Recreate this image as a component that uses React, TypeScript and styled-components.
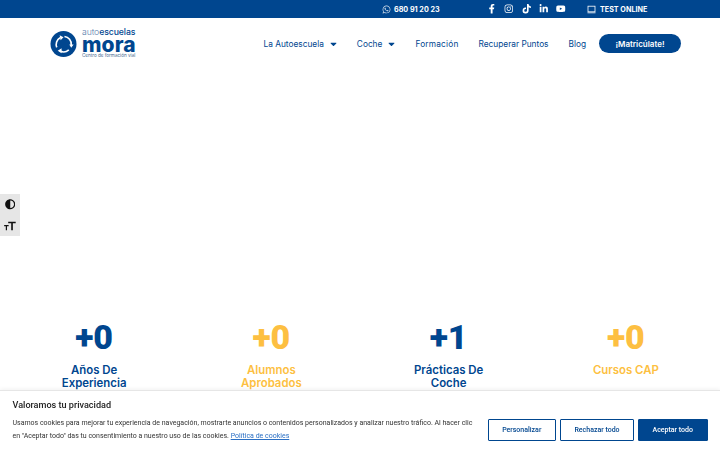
import React from 'react'
import styled, { createGlobalStyle } from 'styled-components'
import { FaWhatsapp, FaFacebookF, FaInstagram, FaTiktok, FaLinkedinIn, FaYoutube, FaCaretDown, FaAdjust } from 'react-icons/fa'

const BLUE = '#00468f'
const YELLOW = '#fdbf41'

const Global = createGlobalStyle`
  html, body { margin: 0; padding: 0; background: #fff; overflow: hidden; }
  body { font-family: Inter, "Open Sans", sans-serif; width: 720px; height: 450px; }
  * { box-sizing: border-box; }
`

const Page = styled.div`
  width: 720px;
  height: 450px;
  overflow: hidden;
`

const TopBar = styled.div`
  height: 18px;
  background: ${BLUE};
  color: #fff;
  display: flex;
  align-items: center;
  padding-left: 382px;
`
const Phone = styled.div`
  display: flex;
  align-items: center;
  gap: 3px;
  width: 105px;
  font-size: 7.2px;
  font-weight: 700;
  svg { width: 9px; height: 9px; opacity: .85; }
`
const Socials = styled.div`
  display: flex;
  align-items: center;
  gap: 7.8px;
  width: 100px;
  svg { display: block; width: 9.5px; height: 9.5px; }
`
const TestLink = styled.div`
  display: flex;
  align-items: center;
  gap: 4px;
  font-size: 7.2px;
  font-weight: 700;
`

const Header = styled.header`
  height: 52px;
  display: flex;
  align-items: center;
  justify-content: space-between;
  padding: 0 39px 1px 50px;
`
const Logo = styled.div`
  display: flex;
  align-items: center;
  gap: 5px;
  color: ${BLUE};
`
const LogoText = styled.div`
  display: flex;
  flex-direction: column;
`
const LogoTop = styled.span`
  font-size: 8.7px;
  line-height: 9px;
  font-weight: 300;
  color: #5b7fae;
  letter-spacing: -.1px;
  b { font-weight: 500; color: ${BLUE}; }
`
const LogoName = styled.span`
  font-size: 21px;
  line-height: 16px;
  font-weight: 800;
  letter-spacing: .1px;
`
const LogoSub = styled.span`
  font-size: 4.6px;
  line-height: 6px;
  color: #47698f;
`

const Nav = styled.nav`
  display: flex;
  align-items: center;
  gap: 20px;
`
const NavItem = styled.a`
  display: flex;
  align-items: center;
  gap: 6px;
  font-size: 8.3px;
  color: ${BLUE};
  letter-spacing: ${p => (p.$wide ? '.2px' : '0')};
  svg { width: 7px; height: 10px; }
`
const Enroll = styled.a`
  width: 82px;
  height: 19px;
  margin-left: -7px;
  border-radius: 10px;
  background: ${BLUE};
  color: #fff;
  font-size: 8px;
  font-weight: 600;
  display: flex;
  align-items: center;
  justify-content: center;
`

const Stats = styled.section`
  margin-top: 249px;
  padding: 0 5.5px;
  display: grid;
  grid-template-columns: repeat(4, 1fr);
`
const Stat = styled.div`
  text-align: center;
  color: ${p => (p.$accent ? YELLOW : BLUE)};
`
const Count = styled.div`
  font-family: Roboto, sans-serif;
  font-size: 34px;
  line-height: 37px;
  font-weight: 900;
`
const Label = styled.div`
  margin: 8px auto 0;
  width: 95px;
  font-size: 11.4px;
  line-height: 13px;
  font-weight: 600;
`

const A11y = styled.div`
  position: fixed;
  left: 0;
  top: 194px;
  width: 20px;
  background: #e6e6e6;
  color: #111;
  display: flex;
  flex-direction: column;
`
const A11yButton = styled.div`
  height: 21px;
  display: flex;
  align-items: center;
  justify-content: center;
`

const Cookie = styled.div`
  position: fixed;
  left: 0;
  right: 0;
  bottom: 0;
  height: 60px;
  background: #fff;
  border-top: 1px solid #e6e6e6;
  box-shadow: 0 -1px 4px rgba(0, 0, 0, .06);
  padding: 0 12.5px;
  display: flex;
  align-items: center;
  justify-content: space-between;
  font-family: Roboto, sans-serif;
`
const CookieText = styled.div`
  width: 462px;
`
const CookieTitle = styled.div`
  font-size: 9.1px;
  font-weight: 500;
  color: #212121;
  line-height: 12px;
  margin: 1px 0 6px;
`
const CookieBody = styled.div`
  font-size: 7px;
  line-height: 12.6px;
  color: #333;
  a { color: #2a6fc4; text-decoration: underline; }
`
const Actions = styled.div`
  display: flex;
  gap: 4px;
  margin-top: 18px;
`
const CookieButton = styled.button`
  height: 22px;
  width: ${p => p.$w}px;
  padding: 0;
  border: 1.2px solid ${BLUE};
  border-radius: 1px;
  background: ${p => (p.$solid ? BLUE : '#fff')};
  color: ${p => (p.$solid ? '#fff' : BLUE)};
  font: 500 7px Roboto, sans-serif;
`

const LogoMark = () => (
  <svg width="27" height="28" viewBox="0 0 28 28">
    <circle cx="14" cy="14" r="13.5" fill={BLUE} />
    <g fill="none" stroke="#fff" strokeWidth="1.7">
      <path d="M7 17.5 A8 8 0 0 1 10.5 7.5" />
      <path d="M15 6.2 A8 8 0 0 1 22 15" />
      <path d="M19.5 20 A8 8 0 0 1 10 21" />
    </g>
    <g fill="#fff">
      <path d="M10 5 L14 7 L11 10 Z" />
      <path d="M20 14.5 L24.5 14.5 L22 18 Z" />
      <path d="M12 18.5 L12 23.5 L8 21 Z" />
    </g>
  </svg>
)

const TabletIcon = () => (
  <svg width="9" height="9" viewBox="0 0 9 9" fill="none" stroke="#fff" strokeWidth=".8">
    <rect x="1" y="1.2" width="7" height="5.6" />
    <path d="M.5 7.8h8" />
  </svg>
)

const TextSizeIcon = () => (
  <svg width="12" height="12" viewBox="0 0 16 12" fill="#111">
    <path d="M5.6 0.4h10v2H11.8V11.8H9.6V2.4H5.6z" />
    <path d="M0.2 4.8h6v1.5H4V11.8H2.4V6.3H0.2z" />
  </svg>
)

const stats = [
  { count: '+0', label: 'Años De Experiencia' },
  { count: '+0', label: 'Alumnos Aprobados', accent: true },
  { count: '+1', label: 'Prácticas De Coche' },
  { count: '+0', label: 'Cursos CAP', accent: true },
]

export default function App() {
  return (
    <Page>
      <Global />
      <TopBar>
        <Phone><FaWhatsapp />680 91 20 23</Phone>
        <Socials>
          <FaFacebookF /><FaInstagram /><FaTiktok /><FaLinkedinIn /><FaYoutube />
        </Socials>
        <TestLink><TabletIcon />TEST ONLINE</TestLink>
      </TopBar>
      <Header>
        <Logo>
          <LogoMark />
          <LogoText>
            <LogoTop>auto<b>escuelas</b></LogoTop>
            <LogoName>mora</LogoName>
            <LogoSub>Centro de formación vial</LogoSub>
          </LogoText>
        </Logo>
        <Nav>
          <NavItem>La Autoescuela <FaCaretDown /></NavItem>
          <NavItem>Coche <FaCaretDown /></NavItem>
          <NavItem $wide>Formación</NavItem>
          <NavItem>Recuperar Puntos</NavItem>
          <NavItem>Blog</NavItem>
          <Enroll>¡Matricúlate!</Enroll>
        </Nav>
      </Header>
      <Stats>
        {stats.map((s) => (
          <Stat key={s.label} $accent={s.accent}>
            <Count>{s.count}</Count>
            <Label>{s.label}</Label>
          </Stat>
        ))}
      </Stats>
      <A11y>
        <A11yButton><FaAdjust size={10.5} /></A11yButton>
        <A11yButton><TextSizeIcon /></A11yButton>
      </A11y>
      <Cookie>
        <CookieText>
          <CookieTitle>Valoramos tu privacidad</CookieTitle>
          <CookieBody>
            Usamos cookies para mejorar tu experiencia de navegación, mostrarte anuncios o contenidos personalizados y analizar nuestro tráfico. Al hacer clic en "Aceptar todo" das tu consentimiento a nuestro uso de las cookies. <a>Política de cookies</a>
          </CookieBody>
        </CookieText>
        <Actions>
          <CookieButton $w={68.5}>Personalizar</CookieButton>
          <CookieButton $w={74}>Rechazar todo</CookieButton>
          <CookieButton $w={69.5} $solid>Aceptar todo</CookieButton>
        </Actions>
      </Cookie>
    </Page>
  )
}
